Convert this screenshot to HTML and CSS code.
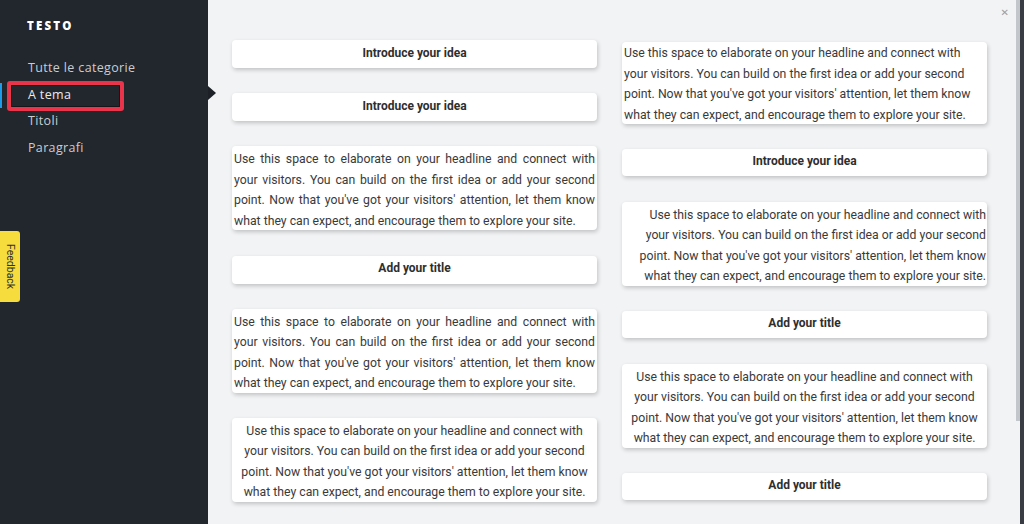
FILE: index.html
```html
<!DOCTYPE html>
<html lang="it">
<head>
<meta charset="utf-8">
<title>Testo</title>
<link rel="stylesheet" href="styles.css">
</head>
<body>
<aside class="sidebar">
  <h1 class="brand">TESTO</h1>
  <ul class="menu">
    <li class="menu-item">Tutte le categorie</li>
    <li class="menu-item active">A tema</li>
    <li class="menu-item">Titoli</li>
    <li class="menu-item">Paragrafi</li>
  </ul>
  <span class="pointer"></span>
  <div class="feedback">Feedback</div>
</aside>
<main class="main">
  <button class="close" aria-label="Chiudi">&#x2715;</button>
  <div class="content">
    <div class="col">
      <div class="card title">Introduce your idea</div>
      <div class="card title">Introduce your idea</div>
      <div class="card para justify">Use this space to elaborate on your headline and connect with your visitors. You can build on the first idea or add your second point. Now that you've got your visitors' attention, let them know what they can expect, and encourage them to explore your site.</div>
      <div class="card title">Add your title</div>
      <div class="card para justify">Use this space to elaborate on your headline and connect with your visitors. You can build on the first idea or add your second point. Now that you've got your visitors' attention, let them know what they can expect, and encourage them to explore your site.</div>
      <div class="card para center">Use this space to elaborate on your headline and connect with your visitors. You can build on the first idea or add your second point. Now that you've got your visitors' attention, let them know what they can expect, and encourage them to explore your site.</div>
    </div>
    <div class="col col-right">
      <div class="card para left">Use this space to elaborate on your headline and connect with your visitors. You can build on the first idea or add your second point. Now that you've got your visitors' attention, let them know what they can expect, and encourage them to explore your site.</div>
      <div class="card title">Introduce your idea</div>
      <div class="card para right">Use this space to elaborate on your headline and connect with your visitors. You can build on the first idea or add your second point. Now that you've got your visitors' attention, let them know what they can expect, and encourage them to explore your site.</div>
      <div class="card title">Add your title</div>
      <div class="card para center">Use this space to elaborate on your headline and connect with your visitors. You can build on the first idea or add your second point. Now that you've got your visitors' attention, let them know what they can expect, and encourage them to explore your site.</div>
      <div class="card title">Add your title</div>
    </div>
  </div>
  <div class="scrollbar"><div class="thumb"></div></div>
  <div class="edge"></div>
</main>
</body>
</html>
```
FILE: styles.css
```css
*, *::before, *::after { box-sizing: border-box; }
html, body { margin: 0; height: 100%; }
body {
  display: flex;
  width: 1024px;
  height: 524px;
  overflow: hidden;
  font-family: Roboto, "Liberation Sans", sans-serif;
  background: #f1f3f5;
}
.sidebar {
  position: relative;
  z-index: 2;
  width: 208px;
  flex: 0 0 208px;
  background: #22262d;
  padding-top: 18px;
  font-family: "Open Sans", "Liberation Sans", sans-serif;
}
.brand {
  margin: 0 0 0 27px;
  font-size: 11.5px;
  line-height: 16px;
  font-weight: 800;
  letter-spacing: 2.2px;
  color: #ffffff;
}
.menu {
  list-style: none;
  margin: 21px 0 0;
  padding: 0;
}
.menu-item {
  position: relative;
  padding-left: 28px;
  height: 26.7px;
  line-height: 26.7px;
  font-size: 12.5px;
  letter-spacing: 0.35px;
  color: #c9cdd2;
}
.menu-item.active { color: #e9ebee; }
.menu-item.active::before {
  content: "";
  position: absolute;
  left: 0;
  top: 1px;
  width: 2px;
  height: 25px;
  background: #1e9be9;
}
.menu-item.active::after {
  content: "";
  position: absolute;
  left: 7px;
  top: -1px;
  width: 117px;
  height: 30px;
  border: 4px solid #e9344c;
  border-radius: 3px;
  box-shadow: inset 0 0 0 1px #14161a;
}
.pointer {
  position: absolute;
  left: 208px;
  top: 86px;
  width: 0;
  height: 0;
  border-left: 8px solid #1d2026;
  border-top: 7.5px solid transparent;
  border-bottom: 7.5px solid transparent;
}
.feedback {
  position: absolute;
  left: 0;
  top: 231px;
  width: 20px;
  height: 71px;
  background: #f6dc3c;
  border-radius: 0 3px 3px 0;
  writing-mode: vertical-rl;
  font-family: Roboto, "Liberation Sans", sans-serif;
  font-size: 10.5px;
  line-height: 20px;
  text-align: center;
  color: #2f2f2f;
}
.main {
  position: relative;
  flex: 1;
  display: flex;
  background: #f1f3f5;
}
.close {
  position: absolute;
  right: 15px;
  top: 6px;
  border: 0;
  padding: 0;
  background: none;
  font-size: 10px;
  line-height: 14px;
  color: #9a9ea3;
  font-family: "DejaVu Sans", sans-serif;
}
.content {
  flex: 1;
  display: grid;
  grid-template-columns: 365px 365px;
  column-gap: 25px;
  align-items: start;
  padding: 40px 0 0 24px;
}
.col {
  display: flex;
  flex-direction: column;
  gap: 25.2px;
}
.col-right { padding-top: 1.5px; gap: 25.4px; }
.card {
  background: #ffffff;
  border-radius: 4px;
  box-shadow: 1px 2px 4px rgba(0, 0, 0, 0.2);
  color: #3a3a3a;
}
.title {
  height: 28px;
  display: flex;
  align-items: center;
  justify-content: center;
  padding-bottom: 3px;
  font-size: 12px;
  font-weight: 700;
  color: #2e2e2e;
}
.col-right .title { height: 27px; }
.para {
  font-size: 12.25px;
  line-height: 20.5px;
  padding: 3px 2px 0;
  height: 84px;
}
.col-right .para.left { height: 82.5px; padding-top: 1.5px; }
.justify { text-align: justify; }
.center { text-align: center; }
.left { text-align: left; }
.right { text-align: right; padding-right: 1px; }
.scrollbar {
  width: 4px;
  flex: 0 0 4px;
}
.thumb {
  height: 421px;
  background: #c3c6ca;
}
.edge {
  width: 4px;
  flex: 0 0 4px;
  background: #393c42;
}
```
